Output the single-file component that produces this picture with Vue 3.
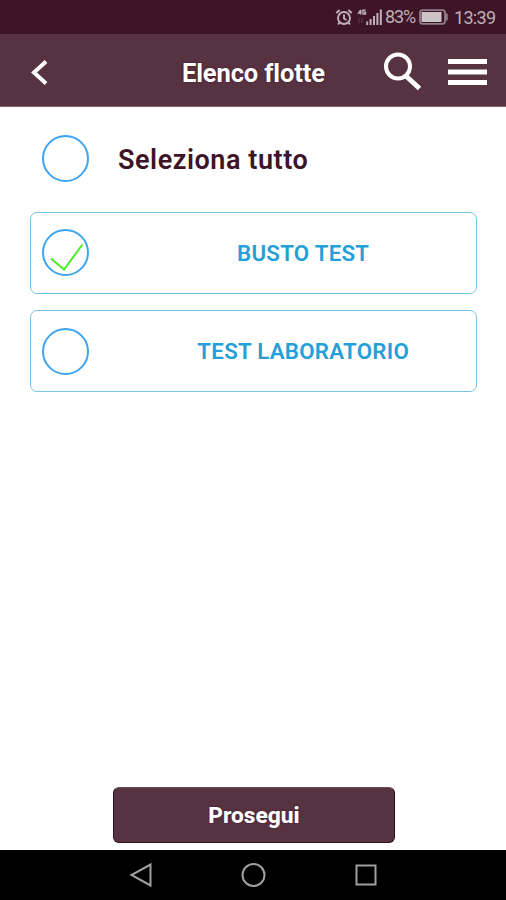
<script setup>
import { ref } from 'vue'

const fleets = ref([
  { name: 'BUSTO TEST', selected: true },
  { name: 'TEST LABORATORIO', selected: false }
])
</script>

<template>
  <div class="screen">
    <div class="status">
      <svg class="alarm" width="18" height="18" viewBox="0 0 18 18" fill="none" stroke="#bfb0b7" stroke-width="1.9">
        <circle cx="9" cy="10" r="6" />
        <path d="M9 6.5v4l2.5 1.5M1.2 5l3.5-3M16.8 5l-3.5-3M4.5 14.5l-1.5 2M13.5 14.5l1.5 2" />
      </svg>
      <svg class="signal" width="26" height="18" viewBox="0 0 26 18" fill="none" stroke="#bfb0b7">
        <path d="M3.8 1.8L1.5 5h2.8M3.8 2v4.5M8.5 2.2H6v3.8h2.5V4.2H7.2" stroke-width="1.4" />
        <path d="M2 10v5M5 10v5" stroke="#5a3044" stroke-width="1.5" />
        <path d="M10.2 13.5v3.5M13.6 11v6M17 8v9M20.4 5v12M23.8 1.5v15.5" stroke-width="2" />
      </svg>
      <span class="percent">83%</span>
      <svg class="battery" width="30" height="16" viewBox="0 0 30 16">
        <rect x="1" y="1.2" width="25" height="13.6" rx="2.5" fill="none" stroke="#918089" stroke-width="1.8" />
        <rect x="2.5" y="3" width="20" height="10" fill="#cec4c8" />
        <path d="M26.5 4.5h2.2v7h-2.2z" fill="#918089" />
      </svg>
      <span class="time">13:39</span>
    </div>

    <header class="header">
      <svg class="back" width="24" height="32" viewBox="0 0 24 32" fill="none" stroke="#fff" stroke-width="4">
        <path d="M18 5.5L6 16.5L18 27.5" />
      </svg>
      <h1 class="title">Elenco flotte</h1>
      <svg class="search" width="42" height="42" viewBox="0 0 42 42" fill="none" stroke="#fff">
        <circle cx="16" cy="15.5" r="12" stroke-width="4" />
        <path d="M24 25L37.5 37.5" stroke-width="5" />
      </svg>
      <svg class="menu" width="39" height="28" viewBox="0 0 39 28" fill="#fff">
        <path d="M0 1h39v5H0zM0 11.5h39v5H0zM0 22h39v5H0z" />
      </svg>
    </header>

    <main class="content">
      <div class="select-all">
        <span class="circle"></span>
        <span class="all-label">Seleziona tutto</span>
      </div>
      <div v-for="fleet in fleets" :key="fleet.name" class="fleet" @click="fleet.selected = !fleet.selected">
        <span class="circle">
          <svg v-if="fleet.selected" width="43" height="43" viewBox="0 0 43 43" fill="none" stroke="#49ef24" stroke-width="2">
            <path d="M7 27.5L20 38.5L38.5 13.5" />
          </svg>
        </span>
        <span class="name">{{ fleet.name }}</span>
      </div>
      <button class="proceed">Prosegui</button>
    </main>

    <nav class="nav">
      <svg width="26" height="26" viewBox="0 0 26 26"><path d="M22.5 2.5v21L3.5 13z" /></svg>
      <svg width="26" height="26" viewBox="0 0 26 26"><circle cx="13.5" cy="13" r="11" /></svg>
      <svg width="26" height="26" viewBox="0 0 26 26"><rect x="3.5" y="3.5" width="19" height="19" /></svg>
    </nav>
  </div>
</template>

<style>
body {
  margin: 0;
}
</style>

<style scoped>
.screen {
  display: flex;
  flex-direction: column;
  box-sizing: border-box;
  width: 506px;
  height: 900px;
  background: #fff;
  font-family: Roboto, "Liberation Sans", sans-serif;
  overflow: hidden;
}
.status {
  display: flex;
  align-items: center;
  flex: none;
  height: 34px;
  padding-left: 335px;
  background: #3e1427;
  color: #bfb0b7;
  font-size: 18px;
  line-height: 34px;
  white-space: nowrap;
}
.status svg {
  flex: none;
}
.signal {
  margin-left: 4px;
}
.percent {
  width: 32px;
  margin-left: 2px;
  letter-spacing: -1.1px;
}
.battery {
  margin-left: 2px;
}
.time {
  margin-left: 5px;
  padding-top: 2px;
  letter-spacing: -0.7px;
}
.header {
  display: flex;
  align-items: center;
  flex: none;
  box-sizing: border-box;
  height: 73px;
  padding: 0 19px 0 28px;
  border-bottom: 1px solid #806570;
  background: #573241;
  color: #fff;
}
.header svg {
  flex: none;
}
.back {
  margin-top: 3px;
}
.title {
  width: 160px;
  margin: 6px 0 0 130px;
  font-size: 25.5px;
  line-height: 32px;
  font-weight: 700;
  letter-spacing: -0.12px;
  text-shadow: 0 0 2px #3e1427;
  white-space: nowrap;
}
.search {
  margin-left: 39.5px;
  margin-top: 3px;
}
.menu {
  margin-left: auto;
  margin-top: 3px;
}
.content {
  display: flex;
  flex-direction: column;
  flex: 1;
  padding: 24px 29px 7.5px 30px;
}
.select-all {
  display: flex;
  align-items: center;
  height: 56px;
  padding-left: 12.4px;
  margin-bottom: 24.5px;
}
.circle {
  flex: none;
  box-sizing: border-box;
  width: 47px;
  height: 47px;
  border: 2px solid #3da5f2;
  border-radius: 50%;
}
.circle svg {
  display: block;
}
.select-all .circle {
  margin-top: -1px;
}
.all-label {
  margin-top: 1px;
  margin-left: 28.6px;
  color: #3e1427;
  font-size: 27px;
  font-weight: 600;
  letter-spacing: 0.55px;
  line-height: 36px;
  white-space: nowrap;
}
.fleet {
  display: flex;
  align-items: center;
  flex: none;
  box-sizing: border-box;
  height: 82px;
  margin-bottom: 16.5px;
  padding-left: 11.4px;
  border: 1.5px solid #79c3e7;
  border-radius: 7px;
}
.name {
  flex: 1;
  padding-left: 41px;
  color: #249fd8;
  font-size: 22.3px;
  font-weight: 600;
  letter-spacing: 0.25px;
  line-height: 30px;
  text-align: center;
  white-space: nowrap;
}
.proceed {
  width: 282px;
  height: 56px;
  margin: auto auto 0 83px;
  padding: 2px 0 0;
  border: 1.5px solid #35101f;
  border-top-color: #6e4c5a;
  border-radius: 6px;
  background: #573241;
  color: #fff;
  font: 800 22.7px/30px Roboto, "Liberation Sans", sans-serif;
  text-shadow: 0 0 2px #3e1427;
}
.nav {
  display: flex;
  align-items: center;
  justify-content: center;
  gap: 86.5px;
  flex: none;
  height: 50px;
  background: #000;
}
.nav svg {
  fill: none;
  stroke: #a0a0a0;
  stroke-width: 2;
}
</style>
